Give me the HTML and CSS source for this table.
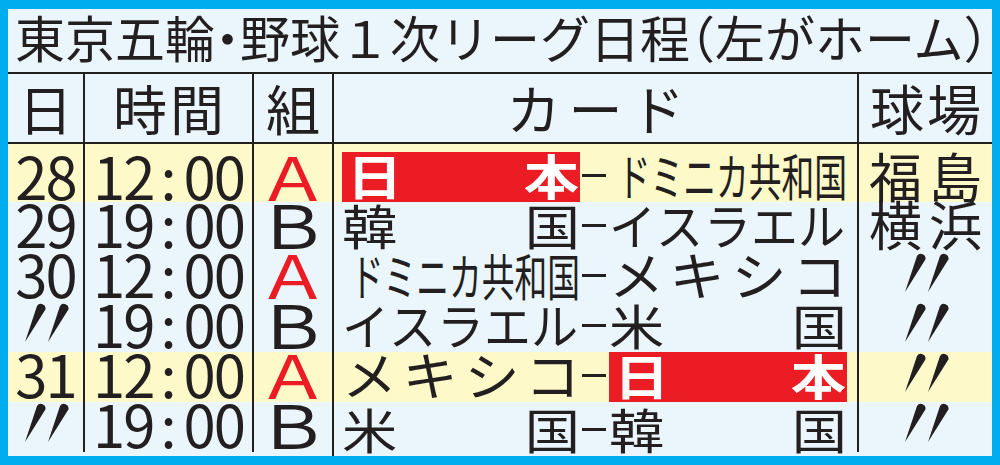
FILE: index.html
```html
<!DOCTYPE html>
<html lang="ja">
<head>
<meta charset="utf-8">
<title>東京五輪・野球１次リーグ日程</title>
<link rel="stylesheet" href="styles.css">
</head>
<body>
<div class="frame">
  <div class="title">東京五輪<span class="h">・</span>野球１次リーグ日程<span class="h">（</span>左がホーム<span class="h">）</span></div>

  <div class="grid hrow">
    <div class="hc">日</div>
    <div class="hc">時間</div>
    <div class="hc">組</div>
    <div class="hc spread">カード</div>
    <div class="hc">球場</div>
  </div>

  <div class="grid row first y">
    <div class="c num">28</div>
    <div class="c num">12<span class="colon">:</span>00</div>
    <div class="c"><span class="grp red-t">Ａ</span></div>
    <div class="card">
      <div class="team red wide"><span>日</span><span>本</span></div>
      <div class="dash"><span class="bar"></span></div>
      <div class="team cond"><span class="sq">ドミニカ共和国</span></div>
    </div>
    <div class="c ven">福島</div>
  </div>

  <div class="grid row">
    <div class="c num">29</div>
    <div class="c num">19<span class="colon">:</span>00</div>
    <div class="c"><span class="grp">Ｂ</span></div>
    <div class="card">
      <div class="team wide"><span>韓</span><span>国</span></div>
      <div class="dash"><span class="bar"></span></div>
      <div class="team isr"><span>イ</span><span>ス</span><span>ラ</span><span>エ</span><span>ル</span></div>
    </div>
    <div class="c ven">横浜</div>
  </div>

  <div class="grid row">
    <div class="c num">30</div>
    <div class="c num">12<span class="colon">:</span>00</div>
    <div class="c"><span class="grp red-t">Ａ</span></div>
    <div class="card">
      <div class="team cond"><span class="sq">ドミニカ共和国</span></div>
      <div class="dash"><span class="bar"></span></div>
      <div class="team mex"><span>メ</span><span>キ</span><span>シ</span><span>コ</span></div>
    </div>
    <div class="c"><svg class="ditto" viewBox="0 0 48 40" width="48" height="40"><path d="M3 39 L15 3 A4.6 4.6 0 0 1 23.4 6.4 Z"/><path d="M26 39 L38 3 A4.6 4.6 0 0 1 46.4 6.4 Z"/></svg></div>
  </div>

  <div class="grid row">
    <div class="c"><svg class="ditto" viewBox="0 0 48 40" width="48" height="40"><path d="M3 39 L15 3 A4.6 4.6 0 0 1 23.4 6.4 Z"/><path d="M26 39 L38 3 A4.6 4.6 0 0 1 46.4 6.4 Z"/></svg></div>
    <div class="c num">19<span class="colon">:</span>00</div>
    <div class="c"><span class="grp">Ｂ</span></div>
    <div class="card">
      <div class="team isr"><span>イ</span><span>ス</span><span>ラ</span><span>エ</span><span>ル</span></div>
      <div class="dash"><span class="bar"></span></div>
      <div class="team wide"><span>米</span><span>国</span></div>
    </div>
    <div class="c"><svg class="ditto" viewBox="0 0 48 40" width="48" height="40"><path d="M3 39 L15 3 A4.6 4.6 0 0 1 23.4 6.4 Z"/><path d="M26 39 L38 3 A4.6 4.6 0 0 1 46.4 6.4 Z"/></svg></div>
  </div>

  <div class="grid row y">
    <div class="c num">31</div>
    <div class="c num">12<span class="colon">:</span>00</div>
    <div class="c"><span class="grp red-t">Ａ</span></div>
    <div class="card">
      <div class="team mex"><span>メ</span><span>キ</span><span>シ</span><span>コ</span></div>
      <div class="dash"><span class="bar"></span></div>
      <div class="team red wide"><span>日</span><span>本</span></div>
    </div>
    <div class="c"><svg class="ditto" viewBox="0 0 48 40" width="48" height="40"><path d="M3 39 L15 3 A4.6 4.6 0 0 1 23.4 6.4 Z"/><path d="M26 39 L38 3 A4.6 4.6 0 0 1 46.4 6.4 Z"/></svg></div>
  </div>

  <div class="grid row last">
    <div class="c"><svg class="ditto" viewBox="0 0 48 40" width="48" height="40"><path d="M3 39 L15 3 A4.6 4.6 0 0 1 23.4 6.4 Z"/><path d="M26 39 L38 3 A4.6 4.6 0 0 1 46.4 6.4 Z"/></svg></div>
    <div class="c num">19<span class="colon">:</span>00</div>
    <div class="c"><span class="grp">Ｂ</span></div>
    <div class="card">
      <div class="team wide"><span>米</span><span>国</span></div>
      <div class="dash"><span class="bar"></span></div>
      <div class="team wide"><span>韓</span><span>国</span></div>
    </div>
    <div class="c"><svg class="ditto" viewBox="0 0 48 40" width="48" height="40"><path d="M3 39 L15 3 A4.6 4.6 0 0 1 23.4 6.4 Z"/><path d="M26 39 L38 3 A4.6 4.6 0 0 1 46.4 6.4 Z"/></svg></div>
  </div>
</div>
</body>
</html>
```
FILE: styles.css
```css
html, body {
  margin: 0;
  padding: 0;
}

.frame {
  width: 1000px;
  height: 465px;
  box-sizing: border-box;
  border-style: solid;
  border-color: #00aeef;
  border-width: 9px 8px;
  background: #eaf6fc;
  display: flex;
  flex-direction: column;
  font-family: "Noto Sans CJK JP", "Noto Sans", sans-serif;
  color: #231f20;
  overflow: hidden;
}

.title {
  height: 63px;
  flex: none;
  box-sizing: content-box;
  border-bottom: 2px solid #231f20;
  font-size: 50px;
  line-height: 55px;
  padding-left: 7px;
  white-space: nowrap;
}

.title .h {
  font-feature-settings: "halt";
}

.grid {
  display: grid;
  grid-template-columns: 75px 169px 80px 525px 135px;
  flex: none;
}

.hrow {
  height: 68px;
  border-bottom: 2px solid #231f20;
}

.hc {
  font-size: 54px;
  line-height: 68px;
  letter-spacing: 3px;
  text-indent: 3px;
  text-align: center;
  white-space: nowrap;
}

.hc.spread {
  letter-spacing: 8px;
  text-indent: 8px;
}

.hc + .hc {
  border-left: 2px solid #231f20;
}

.row {
  height: 50px;
}

.row.first {
  height: 58px;
}

.row.last {
  flex: 1;
  height: auto;
}

.y {
  background: #fef9c8;
}

.row > div + div {
  border-left: 2px solid #231f20;
}

.c {
  display: flex;
  align-items: center;
  justify-content: center;
  box-sizing: border-box;
  padding-bottom: 8px;
  height: 50px;
  white-space: nowrap;
}

.first .c {
  height: 58px;
  padding-top: 10px;
  padding-bottom: 6px;
}

.num {
  font-size: 58px;
  line-height: 40px;
  letter-spacing: -2px;
}

.colon {
  margin: 0 9px 0 7px;
}

.grp {
  display: inline-block;
  font-size: 60px;
  line-height: 40px;
  transform: scaleX(1.2);
}

.red-t {
  color: #ec1c24;
}

.ven {
  font-size: 53px;
  line-height: 40px;
  letter-spacing: 7px;
  padding-left: 7px;
}

.ditto path {
  fill: #231f20;
}

.card {
  display: flex;
  align-items: flex-end;
  padding-left: 8px;
  box-sizing: border-box;
}

.team {
  flex: none;
  width: 238px;
  height: 50px;
  box-sizing: border-box;
  display: flex;
  justify-content: space-between;
  align-items: center;
  padding-bottom: 7px;
  font-size: 48px;
  line-height: 40px;
  white-space: nowrap;
}

.team span {
  display: inline-block;
  flex: none;
}

.wide span {
  transform: scaleX(1.15);
  transform-origin: left center;
}

.wide span:last-child {
  transform-origin: right center;
}

.mex {
  font-size: 52px;
}

.mex span {
  transform: scaleX(1.06);
}

.mex span:first-child {
  transform-origin: left center;
}

.mex span:last-child {
  transform-origin: right center;
}

.isr {
  font-size: 49px;
}

.isr span {
  width: 46px;
  transform: scaleX(0.96);
  transform-origin: left center;
}

.isr span:last-child {
  width: 49px;
}

.team.red {
  background: #ec1c24;
  color: #ffffff;
  font-weight: 700;
  padding-left: 5px;
  padding-right: 1px;
}

.cond {
  justify-content: flex-end;
  font-size: 50px;
}

.team .sq {
  transform: scaleX(0.655);
  transform-origin: right center;
}

.dash {
  flex: none;
  width: 29px;
  height: 50px;
  box-sizing: border-box;
  display: flex;
  align-items: center;
  padding: 0 3px 3px 2px;
}

.bar {
  display: block;
  width: 24px;
  height: 3px;
  background: #231f20;
}
```
